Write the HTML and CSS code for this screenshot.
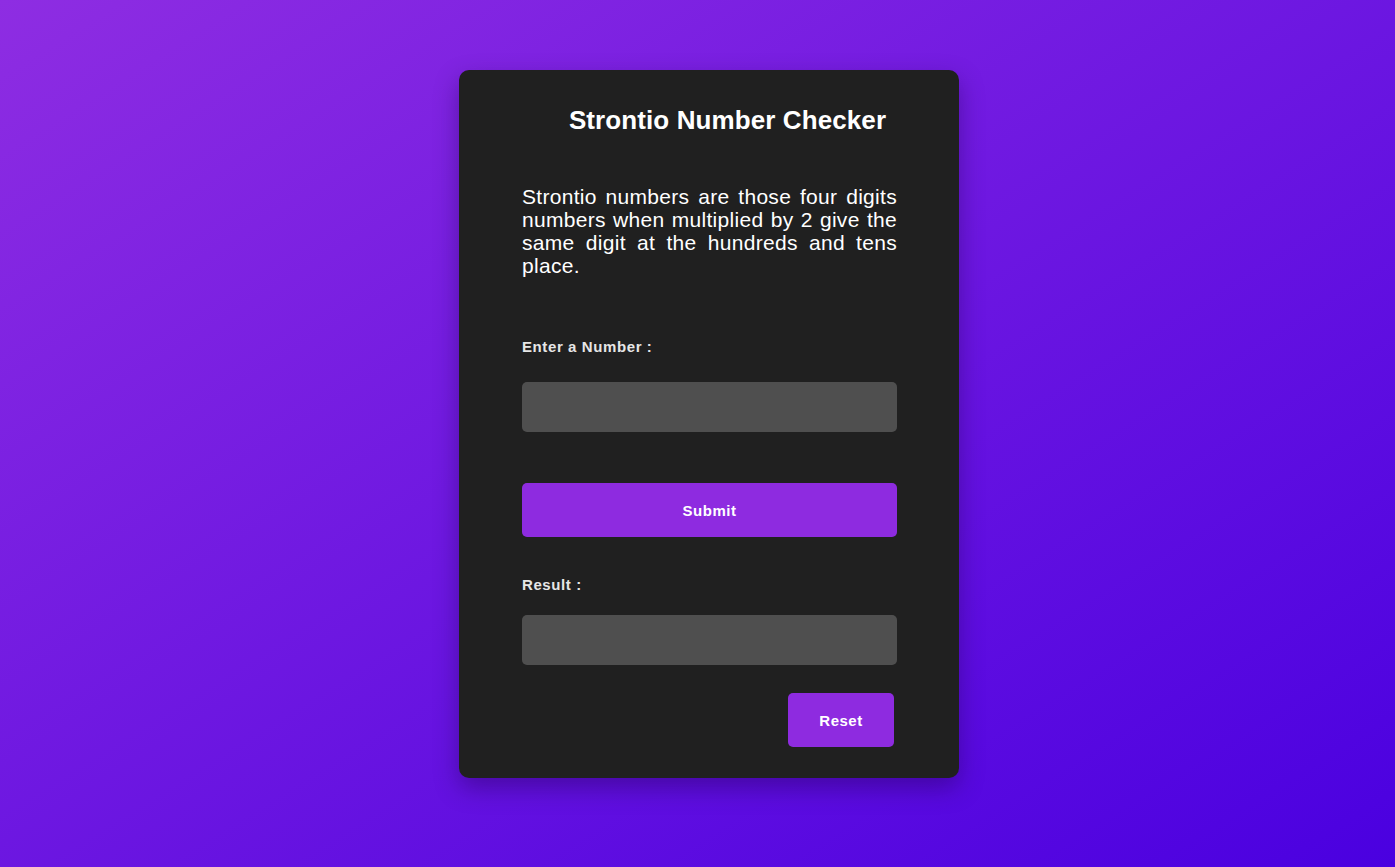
FILE: index.html
```html
<!DOCTYPE html>
<html>
<head>
<meta charset="utf-8">
<link rel="stylesheet" href="styles.css">
</head>
<body>
<main class="card">
  <h2 class="title">Strontio Number Checker</h2>
  <p class="desc">Strontio numbers are those four digits numbers when multiplied by 2 give the same digit at the hundreds and tens place.</p>
  <label class="label label-number" for="num">Enter a Number :</label>
  <input class="field field-number" id="num" type="text">
  <button class="btn btn-submit">Submit</button>
  <label class="label label-result" for="res">Result :</label>
  <input class="field field-result" id="res" type="text" readonly>
  <div class="actions">
    <button class="btn btn-reset">Reset</button>
  </div>
</main>
</body>
</html>
```

FILE: styles.css
```css
* { box-sizing: border-box; }
html, body { height: 100%; }
body {
  margin: 0;
  padding-left: 23px;
  font-family: "Liberation Sans", Arial, sans-serif;
  background: linear-gradient(to bottom right, #8e2de2, #4a00e0);
  display: flex;
  justify-content: center;
  align-items: flex-start;
}
.card {
  margin-top: 70px;
  width: 500px;
  height: 708px;
  background: #202020;
  border-radius: 10px;
  box-shadow: 0 10px 25px rgba(40, 0, 90, 0.45);
  padding: 0 62px 0 63px;
  display: flex;
  flex-direction: column;
}
.title {
  margin: 35px 0 0 36px;
  font-size: 26px;
  line-height: 30px;
  font-weight: bold;
  color: #fff;
  text-align: center;
  letter-spacing: 0.1px;
}
.desc {
  margin: 50px 0 0 0;
  font-size: 21px;
  line-height: 23px;
  color: #fff;
  text-align: justify;
  letter-spacing: 0.3px;
}
.label {
  display: block;
  font-size: 15px;
  line-height: 17px;
  font-weight: bold;
  color: #e6e6e6;
  letter-spacing: 0.6px;
}
.label-number { margin-top: 61px; }
.label-result { margin-top: 39px; }
.field {
  display: block;
  width: 375px;
  height: 50px;
  border: none;
  border-radius: 5px;
  background: #4f4f4f;
  outline: none;
  color: #fff;
  font-size: 16px;
  padding: 0 12px;
}
.field-number { margin-top: 27px; }
.field-result { margin-top: 22px; }
.btn {
  border: none;
  border-radius: 5px;
  background: #8e2be0;
  color: #fff;
  font-family: "Liberation Sans", Arial, sans-serif;
  font-size: 15px;
  font-weight: bold;
  letter-spacing: 0.5px;
  height: 54px;
  cursor: pointer;
}
.btn-submit {
  width: 375px;
  margin-top: 51px;
}
.actions {
  display: flex;
  justify-content: flex-end;
  margin-top: 28px;
  padding-right: 3px;
}
.btn-reset { width: 106px; }
```
